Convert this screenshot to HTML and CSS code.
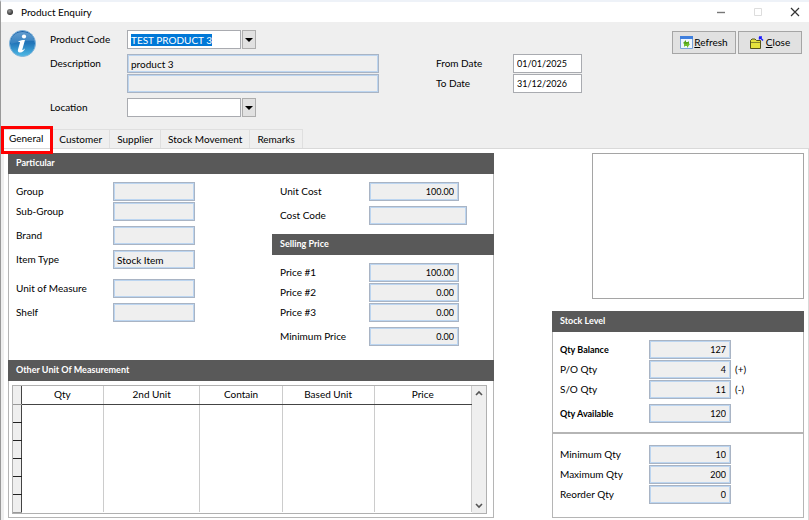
FILE: index.html
```html
<!DOCTYPE html>
<html lang="en">
  <head>
    <meta charset="UTF-8" />
    <meta name="viewport" content="width=device-width, initial-scale=1.0" />
    <title>Product Enquiry</title>
    <link rel="stylesheet" href="styles.css" />
  </head>
  <body>
    <div class="window">
      <!-- title bar -->
      <header class="titlebar">
        <span class="dot"></span>
        <h1 class="title">Product Enquiry</h1>
        <div class="win-btns">
          <button type="button" aria-label="Minimize"><svg width="10" height="10" viewBox="0 0 10 10"><path d="M1 5.5h8" stroke="#777" stroke-width="1.4" /></svg></button>
          <button type="button" aria-label="Maximize" disabled><svg width="10" height="10" viewBox="0 0 10 10"><path d="M1.5 1.5h7v7h-7z" fill="none" stroke="#ddd" /></svg></button>
          <button type="button" aria-label="Close window"><svg width="10" height="10" viewBox="0 0 10 10"><path d="M1 1l8 8M9 1l-8 8" stroke="#333" stroke-width="1.2" /></svg></button>
        </div>
      </header>

      <!-- search fields -->
      <section class="top">
        <svg class="info" width="28" height="28" viewBox="0 0 28 28">
          <defs>
            <linearGradient id="blue" x1="0" y1="0" x2="0" y2="1">
              <stop offset="0" stop-color="#1d5fa5" />
              <stop offset="0.5" stop-color="#2377ba" />
              <stop offset="1" stop-color="#4fbbe6" />
            </linearGradient>
            <linearGradient id="shine" x1="0" y1="0" x2="0" y2="1">
              <stop offset="0" stop-color="#8fc0e6" />
              <stop offset="1" stop-color="#3d87c4" />
            </linearGradient>
          </defs>
          <circle cx="13.5" cy="13.5" r="13" fill="url(#blue)" stroke="#7fb3da" />
          <path d="M2 14C1 6 7 2 13.500 2S26 6 25 11C18 10 9 12 2 14z" fill="url(#shine)" opacity="0.6" />
          <circle cx="15" cy="6.500" r="2.100" fill="#fff" />
          <path d="M9.500 11.200C12 10.200 14 9.800 16 10L13.300 19.500C13.200 20.600 14.500 20 16 18.300C15.500 21 13 22.800 10.800 22.600C9 22.500 8.600 21 9 19.500L11 12.600C10.900 12.100 10.300 12 9.500 12.200z" fill="#fff" />
        </svg>

        <div class="fields search">
          <div class="row">
            <label for="code">Product Code</label>
            <input id="code" class="box combo-text" type="text" value="TEST PRODUCT 3" />
            <button class="drop" type="button" aria-label="Choose product"></button>
          </div>
          <div class="row space">
            <label for="desc1">Description</label>
            <input id="desc1" class="box locked" type="text" value="product 3" readonly />
          </div>
          <div class="row">
            <span class="no-label"></span>
            <input class="box locked" type="text" aria-label="Description line 2" readonly />
          </div>
          <div class="row space">
            <label for="location">Location</label>
            <input id="location" class="box combo-text" type="text" />
            <button class="drop" type="button" aria-label="Choose location"></button>
          </div>
        </div>

        <div class="fields dates">
          <div class="row">
            <label for="from">From Date</label>
            <input id="from" class="box" type="text" value="01/01/2025" />
          </div>
          <div class="row">
            <label for="to">To Date</label>
            <input id="to" class="box" type="text" value="31/12/2026" />
          </div>
        </div>

        <div class="actions">
          <button class="btn" type="button">
            <svg width="13" height="13" viewBox="0 0 13 13">
              <path d="M.5 .5h12v12H.5z" fill="#eef6ff" stroke="#79a3dc" />
              <path d="M0 0h13v3H0z" fill="#3f7fdd" />
              <path d="M3 7l3-3v2h2l1-1v3H6v1z" fill="#55a51c" />
              <path d="M10 8l-3 4v-2H5l-1 1V8h3V7z" fill="#6fbf2e" />
            </svg>
            <span><u>R</u>efresh</span>
          </button>
          <button class="btn close" type="button">
            <svg width="14" height="14" viewBox="0 0 14 14">
              <path d="M.5 12.500V4.500L2 3h3l1.500 1.500h4v8z" fill="#e6e33c" stroke="#55541a" />
              <path d="M1 6.500h9" stroke="#8a882c" />
              <path d="M9 1h3M9.500 1v2.500M10 1.500l3 3" stroke="#1a1aff" stroke-width="1.400" fill="none" />
            </svg>
            <span><u>C</u>lose</span>
          </button>
        </div>
      </section>

      <nav class="tabs">
        <button class="tab active" type="button">General</button>
        <button class="tab" type="button">Customer</button>
        <button class="tab" type="button">Supplier</button>
        <button class="tab" type="button">Stock Movement</button>
        <button class="tab" type="button">Remarks</button>
      </nav>

      <!-- general tab -->
      <main class="page">
        <section class="panel">
          <h2 class="bar">Particular</h2>
          <div class="particular">
            <div class="fields item">
              <div class="row"><label for="group">Group</label><input id="group" class="box locked" readonly /></div>
              <div class="row"><label for="subgroup">Sub-Group</label><input id="subgroup" class="box locked" readonly /></div>
              <div class="row space"><label for="brand">Brand</label><input id="brand" class="box locked" readonly /></div>
              <div class="row space"><label for="type">Item Type</label><input id="type" class="box locked" value="Stock Item" readonly /></div>
              <div class="row space-lg"><label for="uom">Unit of Measure</label><input id="uom" class="box locked" readonly /></div>
              <div class="row space"><label for="shelf">Shelf</label><input id="shelf" class="box locked" readonly /></div>
            </div>
            <div class="prices">
              <div class="fields cost">
                <div class="row"><label for="cost">Unit Cost</label><input id="cost" class="box locked num" value="100.00" readonly /></div>
                <div class="row space"><label for="costcode">Cost Code</label><input id="costcode" class="box locked wide" readonly /></div>
              </div>
              <h2 class="bar">Selling Price</h2>
              <div class="fields cost">
                <div class="row"><label for="price1">Price #1</label><input id="price1" class="box locked num" value="100.00" readonly /></div>
                <div class="row"><label for="price2">Price #2</label><input id="price2" class="box locked num" value="0.00" readonly /></div>
                <div class="row"><label for="price3">Price #3</label><input id="price3" class="box locked num" value="0.00" readonly /></div>
                <div class="row space"><label for="minprice">Minimum Price</label><input id="minprice" class="box locked num" value="0.00" readonly /></div>
              </div>
            </div>
          </div>

          <h2 class="bar">Other Unit Of Measurement</h2>
          <div class="grid-wrap">
            <table class="units">
              <thead>
                <tr>
                  <td class="mark"></td>
                  <th class="c-qty">Qty</th>
                  <th class="c-second">2nd Unit</th>
                  <th class="c-contain">Contain</th>
                  <th class="c-based">Based Unit</th>
                  <th>Price</th>
                </tr>
              </thead>
              <tbody>
                <tr><td class="mark"></td><td></td><td></td><td></td><td></td><td></td></tr>
                <tr><td class="mark"></td><td></td><td></td><td></td><td></td><td></td></tr>
                <tr><td class="mark"></td><td></td><td></td><td></td><td></td><td></td></tr>
                <tr><td class="mark"></td><td></td><td></td><td></td><td></td><td></td></tr>
                <tr><td class="mark"></td><td></td><td></td><td></td><td></td><td></td></tr>
                <tr><td class="mark"></td><td></td><td></td><td></td><td></td><td></td></tr>
              </tbody>
            </table>
            <div class="scroll">
              <button type="button" aria-label="Scroll up"><svg width="8" height="6" viewBox="0 0 8 6"><path d="M1 5l3-3 3 3" fill="none" stroke="#555" stroke-width="1.600" /></svg></button>
              <button type="button" aria-label="Scroll down"><svg width="8" height="6" viewBox="0 0 8 6"><path d="M1 1l3 3 3-3" fill="none" stroke="#555" stroke-width="1.600" /></svg></button>
            </div>
          </div>
        </section>

        <aside class="side">
          <div class="picture"></div>
          <section class="panel stock">
            <h2 class="bar">Stock Level</h2>
            <div class="fields levels">
              <div class="row strong"><label for="balance">Qty Balance</label><input id="balance" class="box locked num" value="127" readonly /></div>
              <div class="row"><label for="po">P/O Qty</label><input id="po" class="box locked num" value="4" readonly /><span class="sign">(+)</span></div>
              <div class="row"><label for="so">S/O Qty</label><input id="so" class="box locked num" value="11" readonly /><span class="sign">(-)</span></div>
              <div class="row space strong"><label for="available">Qty Available</label><input id="available" class="box locked num" value="120" readonly /></div>
            </div>
            <div class="fields levels limits">
              <div class="row"><label for="min">Minimum Qty</label><input id="min" class="box locked num" value="10" readonly /></div>
              <div class="row"><label for="max">Maximum Qty</label><input id="max" class="box locked num" value="200" readonly /></div>
              <div class="row"><label for="reorder">Reorder Qty</label><input id="reorder" class="box locked num" value="0" readonly /></div>
            </div>
          </section>
        </aside>
      </main>
    </div>

    <script>
      // start with the product code selected
      const codeEl = document.querySelector("#code");
      codeEl.focus();
      codeEl.select();
    </script>
  </body>
</html>
```
FILE: styles.css
```css
* {
  box-sizing: border-box;
  margin: 0;
  padding: 0;
}

body,
input,
button {
  font-family: Lato, "Open Sans", sans-serif;
  font-size: 10px;
  line-height: 15px;
  color: #000;
}

.window {
  min-height: 100vh;
  border-top: 2px solid #eef2f8;
  border-left: 1px solid #999;
  background-color: #efefef;
}

/* title bar */
.titlebar {
  display: flex;
  align-items: center;
  height: 20px;
  padding: 0 9px 0 6px;
  background-color: #fff;
}

.dot {
  width: 6px;
  height: 6px;
  border-radius: 50%;
  background: radial-gradient(circle at 40% 35%, #999, #333 70%);
}

.title {
  flex: 1;
  margin-left: 8px;
  font-size: 10px;
  font-weight: normal;
}

.win-btns {
  display: flex;
  gap: 27px;
}

.win-btns button,
.scroll button {
  display: flex;
  border: none;
  background: none;
}

/* fields */
.row {
  display: flex;
  align-items: center;
  height: 19px;
  margin-top: 1px;
}

.row:first-child {
  margin-top: 0;
}

.row.space {
  margin-top: 5px;
}

.row.space-lg {
  margin-top: 10px;
}

.row.strong label {
  font-size: 9px;
  font-weight: bold;
}

.box {
  min-width: 0;
  height: 19px;
  padding: 0 3px;
  border: 1px solid #a9abb0;
  outline: none;
  background-color: #fff;
}

.box.locked {
  border-color: #a9b4c4;
  box-shadow: inset 0 0 0 1px #bcd5f0;
  background-color: #efefef;
}

.box.num {
  padding: 0 4px;
  font-size: 9px;
  text-align: right;
}

.box::selection {
  color: #fff;
  background-color: #0078d7;
}

/* top section */
.top {
  display: flex;
  align-items: flex-start;
  height: 107px;
  padding: 8px 7px 0 8px;
}

.info {
  flex: none;
}

.search {
  width: 330px;
  margin-left: 13px;
}

.search label,
.no-label {
  flex: none;
  width: 77px;
}

.search .locked {
  width: 252px;
}

.combo-text {
  width: 114px;
}

.drop {
  width: 14px;
  height: 19px;
  margin-left: 1px;
  border: 1px solid #adadad;
  background-color: #e1e1e1;
}

.drop::before {
  content: "";
  display: block;
  width: 0;
  margin: 0 auto;
  border: 4px solid transparent;
  border-top-color: #000;
  border-bottom: none;
}

.dates {
  margin: 24px 0 0 56px;
}

.dates label {
  width: 77px;
}

.dates .box {
  width: 69px;
  font-size: 9px;
}

.actions {
  display: flex;
  gap: 2px;
  margin: 1px 0 0 auto;
}

.btn {
  display: flex;
  align-items: center;
  justify-content: center;
  gap: 1px;
  width: 64px;
  height: 23px;
  border: 1px solid #a5a5a5;
  background-color: #e1e1e1;
}

.btn.close {
  gap: 2px;
}

/* tabs */
.tabs {
  display: flex;
  padding-left: 3px;
}

.tab {
  height: 19px;
  padding: 0 7px;
  border: 1px solid #dfdfdf;
  border-left: none;
  border-bottom: none;
  background-color: #efefef;
}

.tab.active {
  position: relative;
  padding: 0 8px 2px 5px;
  background-color: #fff;
}

.tab.active::after {
  content: "";
  position: absolute;
  top: -4px;
  right: -2px;
  bottom: -6px;
  left: -3px;
  border: 3px solid #f00;
}

/* tab page */
.page {
  display: grid;
  grid-template-columns: minmax(0, 1fr) 252px;
  gap: 58px;
  margin-left: 3px;
  padding: 4px 4px 2px;
  border-top: 1px solid #d9d9d9;
  border-right: 1px solid #d9d9d9;
  background-color: #fff;
}

.panel {
  border: 1px solid #b5b5b5;
  border-top: none;
}

.bar {
  height: 21px;
  margin: 0 -1px;
  padding: 0 8px;
  font-size: 9px;
  font-weight: bold;
  line-height: 20px;
  color: #fff;
  background-color: #595959;
}

.particular {
  display: flex;
  height: 186px;
}

.item {
  flex: none;
  width: 264px;
  padding: 8px 0 0 7px;
}

.item label {
  width: 97px;
}

.item .box {
  width: 82px;
}

.prices {
  flex: 1;
}

.prices .bar {
  margin-top: 9px;
  margin-left: -1px;
}

.cost {
  padding: 8px 0 0 7px;
}

.cost label {
  width: 89px;
}

.cost .box {
  width: 90px;
}

.cost .box.wide {
  width: 98px;
}

/* unit table */
.grid-wrap {
  display: flex;
  margin: 4px 6px 3px 3px;
  border: 1px solid #b0b0b0;
}

.units {
  flex: 1;
  height: 126px;
  border-collapse: collapse;
  table-layout: fixed;
}

.units tr {
  height: 18px;
}

.units th {
  border-right: 1px solid #ccc;
  border-bottom: 1px solid #444;
  font-weight: normal;
}

.units td {
  border-right: 1px solid #ccc;
}

.units .mark {
  width: 8px;
  border-right: 1px solid #444;
  border-bottom: 1px solid #222;
  background-color: #efefef;
}

.units tr:last-child .mark {
  border-bottom-color: #999;
}

.c-qty {
  width: 18%;
}

.c-second {
  width: 21%;
}

.c-contain {
  width: 18%;
}

.c-based {
  width: 20%;
}

.scroll {
  display: flex;
  flex-direction: column;
  align-items: center;
  justify-content: space-between;
  width: 14px;
  padding: 4px 0;
  background-color: #efefef;
}

/* right side */
.side {
  display: flex;
  flex-direction: column;
  gap: 12px;
}

.picture {
  height: 146px;
  margin-left: 40px;
  border: 1px solid #a5a5a5;
}

.stock {
  flex: 1;
}

.levels {
  padding: 8px 0 9px 7px;
}

.levels label {
  width: 89px;
}

.levels .box {
  width: 82px;
}

.limits {
  padding: 11px 0 12px 7px;
  border-top: 2px solid #b5b5b5;
}

.sign {
  margin-left: 4px;
}
```
